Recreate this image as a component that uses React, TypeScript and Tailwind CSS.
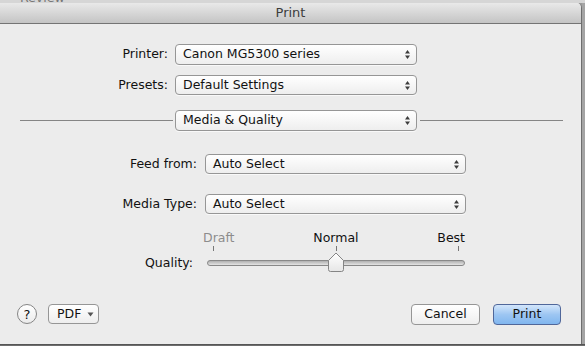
import React from "react";

// Mac OS X style print sheet, "Media & Quality" pane

const font = "font-['Lucida_Grande','DejaVu_Sans',sans-serif]";

function Stepper() {
  return (
    <svg width="7" height="11" viewBox="0 0 7 11" className="shrink-0">
      <path d="M1 4.5 L3.5 1 L6 4.5 Z" fill="#3c3c3c" />
      <path d="M1 6.5 L3.5 10 L6 6.5 Z" fill="#3c3c3c" />
    </svg>
  );
}

function Popup({ label, width, height = 20 }: { label: string; width: number; height?: number }) {
  return (
    <div
      style={{ width, height }}
      className="flex items-center justify-between rounded-[4px] border border-[#969696] bg-linear-to-b from-[#ffffff] to-[#eeeeee] pl-[7px] pr-[5px] text-[12.5px] text-[#111] shadow-[0_1px_0_rgba(255,255,255,0.7)]"
    >
      <span className="leading-none">{label}</span>
      <Stepper />
    </div>
  );
}

function Thumb() {
  return (
    <svg width="18" height="21" viewBox="0 0 18 21" className="absolute left-[120px] top-[-1px]">
      <defs>
        <linearGradient id="thumbFill" x1="0" y1="0" x2="0" y2="1">
          <stop offset="0" stopColor="#ffffff" />
          <stop offset="1" stopColor="#e6e6e6" />
        </linearGradient>
      </defs>
      <path
        d="M1.5 8.5 L9 1 L16.5 8.5 V17.5 Q16.5 19.5 14.5 19.5 H3.5 Q1.5 19.5 1.5 17.5 Z"
        fill="url(#thumbFill)"
        stroke="#858585"
        strokeWidth="1"
      />
    </svg>
  );
}

export default function App() {
  return (
    <div className={`flex h-[346px] w-[585px] flex-col overflow-hidden bg-[#9a9a9a] ${font}`}>
      {/* window behind, only the bottom of its title shows */}
      <div className="h-[3px] shrink-0 overflow-hidden bg-[#d6d6d6] pl-[20px]">
        <div className="mt-[-11px] text-[12.5px] text-[#777]">Review</div>
      </div>

      <div className="flex min-h-0 flex-1">
        <div className="flex w-[582px] flex-col overflow-hidden rounded-tr-[5px] border-r border-[#6e6e6e] bg-[#ececec]">
          {/* title bar */}
          <div className="flex h-[21px] shrink-0 items-center justify-center border-b border-[#747474] bg-linear-to-b from-[#e9e9e9] to-[#c4c4c4] text-[13px] text-[#3c3c3c]">
            Print
          </div>

          {/* Printer */}
          <div className="mt-[20px] flex items-center gap-[7px]">
            <div className="w-[168px] text-right text-[12.5px] text-[#111]">Printer:</div>
            <Popup label="Canon MG5300 series" width={242} height={21} />
          </div>

          {/* Presets */}
          <div className="mt-[10px] flex items-center gap-[7px]">
            <div className="w-[168px] text-right text-[12.5px] text-[#111]">Presets:</div>
            <Popup label="Default Settings" width={242} />
          </div>

          {/* pane selector */}
          <div className="mt-[15px] flex items-center">
            <div className="ml-[20px] h-px w-[153px] bg-[#858585]" />
            <div className="ml-[2px]">
              <Popup label="Media & Quality" width={242} height={21} />
            </div>
            <div className="ml-[3px] h-px w-[143px] bg-[#858585]" />
          </div>

          {/* Feed from */}
          <div className="mt-[23px] flex items-center gap-[8px]">
            <div className="w-[197px] text-right text-[12.5px] text-[#111]">Feed from:</div>
            <Popup label="Auto Select" width={261} />
          </div>

          {/* Media Type */}
          <div className="mt-[20px] flex items-center gap-[8px]">
            <div className="w-[197px] text-right text-[12.5px] text-[#111]">Media Type:</div>
            <Popup label="Auto Select" width={261} />
          </div>

          {/* Quality slider */}
          <div className="ml-[203px] mt-[17px] flex h-[15px] w-[262px] items-center justify-between text-[12.5px] leading-none">
            <span className="text-[#8c8c8c]">Draft</span>
            <span className="text-[#111]">Normal</span>
            <span className="text-[#111]">Best</span>
          </div>
          <div className="ml-[207px] flex h-[5px] w-[258px] justify-between px-[6px]">
            <div className="h-[5px] w-px bg-[#777]" />
            <div className="h-[5px] w-px bg-[#777]" />
            <div className="h-[5px] w-px bg-[#777]" />
          </div>
          <div className="mt-[2px] flex h-[20px] items-center gap-[14px]">
            <div className="w-[193px] text-right text-[12.5px] text-[#111]">Quality:</div>
            <div className="relative h-[20px] w-[258px]">
              <div className="mt-[7px] h-[6px] w-full rounded-full border border-[#888] bg-linear-to-b from-[#b0b0b0] to-[#e4e4e4]" />
              <Thumb />
            </div>
          </div>

          {/* bottom buttons */}
          <div className="mt-[31px] flex h-[20px] items-center pl-[17px] pr-[20px] text-[12.5px] text-[#111]">
            <div className="flex h-[20px] w-[20px] items-center justify-center rounded-full border border-[#858585] bg-linear-to-b from-[#ffffff] to-[#ebebeb] text-[13px] leading-none">
              ?
            </div>
            <div className="ml-[11px] flex h-[20px] w-[51px] items-center gap-[6px] rounded-[4px] border border-[#969696] bg-linear-to-b from-[#ffffff] to-[#eeeeee] pl-[8px]">
              <span className="leading-none">PDF</span>
              <svg width="7" height="5" viewBox="0 0 7 5">
                <path d="M0.5 0.5 H6.5 L3.5 4.5 Z" fill="#555" />
              </svg>
            </div>
            <div className="flex-1" />
            <div className="flex h-[21px] w-[69px] items-center justify-center rounded-[4px] border border-[#969696] bg-linear-to-b from-[#ffffff] to-[#eeeeee]">
              Cancel
            </div>
            <div className="ml-[13px] flex h-[21px] w-[68px] items-center justify-center rounded-[4px] border border-[#50679a] bg-linear-to-b from-[#d3e6fb] via-[#9dc6f2] to-[#80b6ef]">
              Print
            </div>
          </div>
          <div className="flex-1" />
        </div>
        <div className="flex-1 bg-[#a4a4a4]" />
      </div>

      {/* shadow under the sheet */}
      <div className="h-[2px] shrink-0 bg-linear-to-b from-[#4a4a4a] to-[#7a7a7a]" />
    </div>
  );
}
